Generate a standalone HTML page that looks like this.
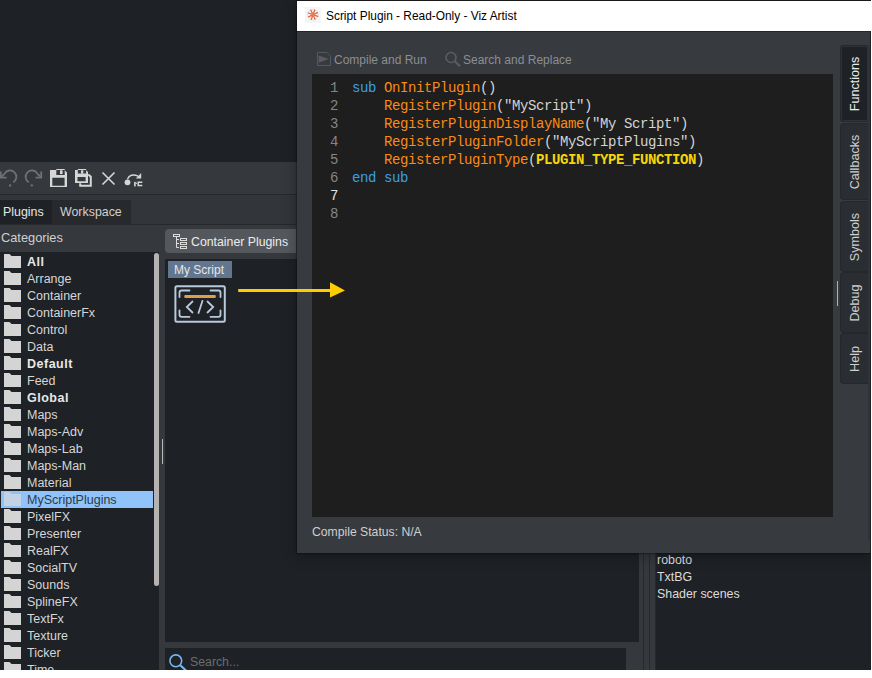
<!DOCTYPE html>
<html><head><meta charset="utf-8">
<style>
*{margin:0;padding:0;box-sizing:border-box}
html,body{width:872px;height:678px;overflow:hidden;background:#ffffff}
body{position:relative;font-family:"Liberation Sans",sans-serif;color:#d8d8d8}
.a{position:absolute}
.txt{white-space:nowrap}
.li{font-size:12.5px;line-height:17px;height:17px}
.k{color:#3d9fe3}.f{color:#fb8b12}.y{color:#f5d60c;font-weight:bold}
.mono{font-family:"Liberation Mono",monospace;font-size:14px;letter-spacing:-0.4px;line-height:18px}
.vt{position:absolute;left:840px;width:28px;border:1px solid #26282c;border-right:none;border-radius:4px 0 0 4px;background:#2a2d31}
.vt span{position:absolute;left:50%;top:50%;transform:translate(-50%,-50%) rotate(-90deg);font-size:12.6px;color:#d0d0d0;white-space:nowrap}
</style></head><body>
<!-- app background -->
<div class="a" style="left:0;top:0;width:872px;height:670px;background:#1e2125"></div>
<!-- toolbar -->
<div class="a" style="left:0;top:162px;width:300px;height:32px;background:#35383c"></div>
<div class="a" style="left:0;top:194px;width:300px;height:1px;background:#26282c"></div>
<div class="a" style="left:0;top:195px;width:300px;height:29px;background:#323539"></div>
<div class="a" style="left:0;top:225px;width:300px;height:34px;background:#35383c"></div>
<svg class="a" style="left:0;top:166px" width="150" height="24" viewBox="0 166 150 24">
  <g fill="none" stroke="#6d7075" stroke-width="1.8">
    <path id="undo" d="M13.2 182.2 A 6.3 6.3 0 1 0 4.6 173.6 L1.2 177.2"/>
    <path d="M0.8 171.5V177.7H6.5"/>
    <g transform="translate(42 0) scale(-1 1)">
      <path d="M13.2 182.2 A 6.3 6.3 0 1 0 4.6 173.6 L1.2 177.2"/>
      <path d="M0.8 171.5V177.7H6.5"/>
    </g>
  </g>
  <g fill="#6d7075">
    <circle cx="10.1" cy="185.4" r="1.2"/>
    <circle cx="31.8" cy="185.4" r="1.2"/>
  </g>
  <!-- save -->
  <path d="M50 170H64.5L67 172.5V187H50Z M56.3 169V175H64.7V169Z M52.3 177.8H64.6V185.8H52.3Z" fill="#d6d6d6" fill-rule="evenodd"/>
  <rect x="60" y="170.3" width="2.6" height="3.8" fill="#d6d6d6"/>
  <!-- save all -->
  <path d="M75 170H86L88 172V183H75Z M77.8 169V173.5H86.1V169Z M77.5 176.9H85.6V181.2H77.5Z" fill="#d6d6d6" fill-rule="evenodd"/>
  <rect x="81" y="170.3" width="2.3" height="3.2" fill="#d6d6d6"/>
  <path d="M88.3 174.6L90.8 176.8V185.7H80.2V183.2" fill="none" stroke="#d6d6d6" stroke-width="2"/>
  <!-- X -->
  <path d="M102.5 172.5L114.5 184.5M114.5 172.5L102.5 184.5" stroke="#d6d6d6" stroke-width="1.6"/>
  <!-- compile icon -->
  <circle cx="127.5" cy="182.3" r="2.9" fill="#d6d6d6"/>
  <path d="M127.4 179.3 Q130 172.8 138.2 176.2" fill="none" stroke="#d6d6d6" stroke-width="1.4"/>
  <path d="M141.2 173L141.2 178.4L135.8 178.4Z" fill="#d6d6d6"/>
  <rect x="134.1" y="181.8" width="1.6" height="4.6" fill="#d6d6d6"/>
  <rect x="135.5" y="182.6" width="1.4" height="1.3" fill="#d6d6d6"/>
  <path d="M142.3 182.3H138.2V185.5H142.3" fill="none" stroke="#d6d6d6" stroke-width="1.5"/>
</svg>
<!-- tabs -->
<div class="a" style="left:0;top:200px;width:52px;height:24px;background:#1e2125"></div>
<div class="a" style="left:52px;top:200px;width:79px;height:24px;background:#28292d"></div>
<div class="a txt" style="left:3px;top:200px;font-size:12.4px;line-height:24px;color:#e6e6e6">Plugins</div>
<div class="a txt" style="left:60px;top:200px;font-size:12.4px;line-height:24px;color:#d0d0d0">Workspace</div>
<div class="a" style="left:0;top:224px;width:300px;height:1px;background:#26282c"></div>
<div class="a txt" style="left:1px;top:229px;font-size:12.8px;line-height:17px;color:#d0d0d0">Categories</div>
<!-- list -->
<div class="a" style="left:0;top:252px;width:159px;height:418px;background:#1e2125"></div>
<svg class="a" style="left:4px;top:254px" width="17" height="14" viewBox="0 0 17 14"><path d="M0 0H5.5L7.5 2H17V14H0Z" fill="#d4d4d4"/></svg>
<div class="a txt li" style="left:27px;top:254px;font-weight:bold;letter-spacing:0.5px;color:#e8e8e8">All</div>
<svg class="a" style="left:4px;top:271px" width="17" height="14" viewBox="0 0 17 14"><path d="M0 0H5.5L7.5 2H17V14H0Z" fill="#d4d4d4"/></svg>
<div class="a txt li" style="left:27px;top:271px;color:#d6d6d6">Arrange</div>
<svg class="a" style="left:4px;top:288px" width="17" height="14" viewBox="0 0 17 14"><path d="M0 0H5.5L7.5 2H17V14H0Z" fill="#d4d4d4"/></svg>
<div class="a txt li" style="left:27px;top:288px;color:#d6d6d6">Container</div>
<svg class="a" style="left:4px;top:305px" width="17" height="14" viewBox="0 0 17 14"><path d="M0 0H5.5L7.5 2H17V14H0Z" fill="#d4d4d4"/></svg>
<div class="a txt li" style="left:27px;top:305px;color:#d6d6d6">ContainerFx</div>
<svg class="a" style="left:4px;top:322px" width="17" height="14" viewBox="0 0 17 14"><path d="M0 0H5.5L7.5 2H17V14H0Z" fill="#d4d4d4"/></svg>
<div class="a txt li" style="left:27px;top:322px;color:#d6d6d6">Control</div>
<svg class="a" style="left:4px;top:339px" width="17" height="14" viewBox="0 0 17 14"><path d="M0 0H5.5L7.5 2H17V14H0Z" fill="#d4d4d4"/></svg>
<div class="a txt li" style="left:27px;top:339px;color:#d6d6d6">Data</div>
<svg class="a" style="left:4px;top:356px" width="17" height="14" viewBox="0 0 17 14"><path d="M0 0H5.5L7.5 2H17V14H0Z" fill="#d4d4d4"/></svg>
<div class="a txt li" style="left:27px;top:356px;font-weight:bold;letter-spacing:0.5px;color:#e8e8e8">Default</div>
<svg class="a" style="left:4px;top:373px" width="17" height="14" viewBox="0 0 17 14"><path d="M0 0H5.5L7.5 2H17V14H0Z" fill="#d4d4d4"/></svg>
<div class="a txt li" style="left:27px;top:373px;color:#d6d6d6">Feed</div>
<svg class="a" style="left:4px;top:390px" width="17" height="14" viewBox="0 0 17 14"><path d="M0 0H5.5L7.5 2H17V14H0Z" fill="#d4d4d4"/></svg>
<div class="a txt li" style="left:27px;top:390px;font-weight:bold;letter-spacing:0.5px;color:#e8e8e8">Global</div>
<svg class="a" style="left:4px;top:407px" width="17" height="14" viewBox="0 0 17 14"><path d="M0 0H5.5L7.5 2H17V14H0Z" fill="#d4d4d4"/></svg>
<div class="a txt li" style="left:27px;top:407px;color:#d6d6d6">Maps</div>
<svg class="a" style="left:4px;top:424px" width="17" height="14" viewBox="0 0 17 14"><path d="M0 0H5.5L7.5 2H17V14H0Z" fill="#d4d4d4"/></svg>
<div class="a txt li" style="left:27px;top:424px;color:#d6d6d6">Maps-Adv</div>
<svg class="a" style="left:4px;top:441px" width="17" height="14" viewBox="0 0 17 14"><path d="M0 0H5.5L7.5 2H17V14H0Z" fill="#d4d4d4"/></svg>
<div class="a txt li" style="left:27px;top:441px;color:#d6d6d6">Maps-Lab</div>
<svg class="a" style="left:4px;top:458px" width="17" height="14" viewBox="0 0 17 14"><path d="M0 0H5.5L7.5 2H17V14H0Z" fill="#d4d4d4"/></svg>
<div class="a txt li" style="left:27px;top:458px;color:#d6d6d6">Maps-Man</div>
<svg class="a" style="left:4px;top:475px" width="17" height="14" viewBox="0 0 17 14"><path d="M0 0H5.5L7.5 2H17V14H0Z" fill="#d4d4d4"/></svg>
<div class="a txt li" style="left:27px;top:475px;color:#d6d6d6">Material</div>
<div class="a" style="left:1px;top:491px;width:152px;height:17px;background:#8fc3fa"></div>
<svg class="a" style="left:4px;top:492px" width="17" height="14" viewBox="0 0 17 14"><path d="M0 0H5.5L7.5 2H17V14H0Z" fill="#c3d2e4"/></svg>
<div class="a txt li" style="left:27px;top:492px;color:#2f3a48">MyScriptPlugins</div>
<svg class="a" style="left:4px;top:509px" width="17" height="14" viewBox="0 0 17 14"><path d="M0 0H5.5L7.5 2H17V14H0Z" fill="#d4d4d4"/></svg>
<div class="a txt li" style="left:27px;top:509px;color:#d6d6d6">PixelFX</div>
<svg class="a" style="left:4px;top:526px" width="17" height="14" viewBox="0 0 17 14"><path d="M0 0H5.5L7.5 2H17V14H0Z" fill="#d4d4d4"/></svg>
<div class="a txt li" style="left:27px;top:526px;color:#d6d6d6">Presenter</div>
<svg class="a" style="left:4px;top:543px" width="17" height="14" viewBox="0 0 17 14"><path d="M0 0H5.5L7.5 2H17V14H0Z" fill="#d4d4d4"/></svg>
<div class="a txt li" style="left:27px;top:543px;color:#d6d6d6">RealFX</div>
<svg class="a" style="left:4px;top:560px" width="17" height="14" viewBox="0 0 17 14"><path d="M0 0H5.5L7.5 2H17V14H0Z" fill="#d4d4d4"/></svg>
<div class="a txt li" style="left:27px;top:560px;color:#d6d6d6">SocialTV</div>
<svg class="a" style="left:4px;top:577px" width="17" height="14" viewBox="0 0 17 14"><path d="M0 0H5.5L7.5 2H17V14H0Z" fill="#d4d4d4"/></svg>
<div class="a txt li" style="left:27px;top:577px;color:#d6d6d6">Sounds</div>
<svg class="a" style="left:4px;top:594px" width="17" height="14" viewBox="0 0 17 14"><path d="M0 0H5.5L7.5 2H17V14H0Z" fill="#d4d4d4"/></svg>
<div class="a txt li" style="left:27px;top:594px;color:#d6d6d6">SplineFX</div>
<svg class="a" style="left:4px;top:611px" width="17" height="14" viewBox="0 0 17 14"><path d="M0 0H5.5L7.5 2H17V14H0Z" fill="#d4d4d4"/></svg>
<div class="a txt li" style="left:27px;top:611px;color:#d6d6d6">TextFx</div>
<svg class="a" style="left:4px;top:628px" width="17" height="14" viewBox="0 0 17 14"><path d="M0 0H5.5L7.5 2H17V14H0Z" fill="#d4d4d4"/></svg>
<div class="a txt li" style="left:27px;top:628px;color:#d6d6d6">Texture</div>
<svg class="a" style="left:4px;top:645px" width="17" height="14" viewBox="0 0 17 14"><path d="M0 0H5.5L7.5 2H17V14H0Z" fill="#d4d4d4"/></svg>
<div class="a txt li" style="left:27px;top:645px;color:#d6d6d6">Ticker</div>
<svg class="a" style="left:4px;top:662px" width="17" height="14" viewBox="0 0 17 14"><path d="M0 0H5.5L7.5 2H17V14H0Z" fill="#d4d4d4"/></svg>
<div class="a txt li" style="left:27px;top:662px;color:#d6d6d6">Time</div>
<div class="a" style="left:154px;top:253px;width:5px;height:333px;background:#b5b2b2;border-radius:2.5px"></div>
<div class="a" style="left:159px;top:252px;width:6px;height:418px;background:#35383c"></div>
<div class="a" style="left:162px;top:439px;width:1px;height:25px;background:#b8b8b8"></div>

<!-- middle panel -->
<div class="a" style="left:165px;top:229px;width:131px;height:24px;background:#54585d;border-radius:4px 0 0 4px"></div>
<svg class="a" style="left:170px;top:231px" width="20" height="20" viewBox="170 231 20 20">
  <g fill="none" stroke="#dcdcdc" stroke-width="1">
    <rect x="173.5" y="234.5" width="6" height="2"/>
    <path d="M176.5 237V247.5H179M176.5 239.5H179M176.5 243.5H179"/>
    <rect x="180.5" y="238.5" width="6" height="2"/>
    <rect x="180.5" y="242.5" width="6" height="2"/>
    <rect x="180.5" y="246.5" width="6" height="2"/>
  </g>
</svg>
<div class="a txt" style="left:191px;top:234px;font-size:12.3px;line-height:17px;color:#ececec">Container Plugins</div>
<div class="a" style="left:165px;top:259px;width:474px;height:383px;background:#1e2125"></div>
<div class="a" style="left:165px;top:642px;width:478px;height:6px;background:#35383c"></div>
<div class="a" style="left:165px;top:648px;width:461px;height:22px;background:#1e2125"></div>
<div class="a" style="left:626px;top:642px;width:17px;height:28px;background:#35383c"></div>
<div class="a" style="left:639px;top:259px;width:17px;height:411px;background:#35383c"></div>
<div class="a" style="left:643px;top:259px;width:1px;height:411px;background:#28292d"></div>
<div class="a" style="left:649px;top:259px;width:1px;height:411px;background:#28292d"></div>
<div class="a" style="left:655px;top:259px;width:1px;height:411px;background:#28292d"></div>
<div class="a" style="left:656px;top:259px;width:216px;height:411px;background:#1e2125"></div>
<svg class="a" style="left:166px;top:652px" width="24" height="18" viewBox="166 652 24 18">
  <circle cx="175.8" cy="660.8" r="5.9" fill="none" stroke="#78b6f2" stroke-width="1.6"/>
  <path d="M180 665L186 670.5" stroke="#78b6f2" stroke-width="2.2"/>
</svg>
<div class="a txt" style="left:190px;top:654px;font-size:12.3px;line-height:17px;color:#6a6d71">Search...</div>

<div class="a" style="left:168px;top:261px;width:64px;height:17px;background:#62778f"></div>
<div class="a txt" style="left:174px;top:262px;font-size:12px;line-height:17px;color:#e6e6e6">My Script</div>
<svg class="a" style="left:170px;top:280px" width="62" height="46" viewBox="170 280 62 46">
  <rect x="175.4" y="286.3" width="49.4" height="35.4" rx="1.5" fill="none" stroke="#b9c9dd" stroke-width="2"/>
  <g fill="none" stroke="#b9c9dd" stroke-width="1.8" stroke-linecap="round">
    <path d="M189.5 290.5H181.5Q179.5 290.5 179.5 292.5V297"/>
    <path d="M210.5 290.5H218.5Q220.5 290.5 220.5 292.5V297"/>
    <path d="M189.5 316.8H181.5Q179.5 316.8 179.5 314.8V310.3"/>
    <path d="M210.5 316.8H218.5Q220.5 316.8 220.5 314.8V310.3"/>
    <path d="M192.5 301.5L186.8 307L192.5 312.5"/>
    <path d="M207.5 301.5L213.2 307L207.5 312.5"/>
    <path d="M202.5 300.8L198.5 313"/>
  </g>
  <rect x="184.3" y="295" width="31.5" height="3" rx="1" fill="#d9a04e"/>
</svg>

<div class="a txt" style="left:657px;top:552px;font-size:12.4px;line-height:17px;color:#dcdcdc">roboto<br>TxtBG<br>Shader scenes</div>

<!-- script window -->
<div class="a" style="left:297px;top:0;width:574px;height:553px;box-shadow:0 3px 14px rgba(0,0,0,0.28),0 0 1px 1px rgba(0,0,0,0.25)"></div>
<div class="a" style="left:297px;top:0;width:575px;height:553px;background:#373a3e"></div>
<div class="a" style="left:297px;top:0;width:575px;height:1px;background:#1a1a1a"></div>
<div class="a" style="left:297px;top:1px;width:575px;height:30px;background:#ffffff"></div>
<div class="a" style="left:305px;top:7px;width:16px;height:16px;background:#f4f5f5"></div>
<svg class="a" style="left:305px;top:7px" width="16" height="16" viewBox="0 0 16 16">
  <circle cx="8" cy="7.7" r="5.3" fill="none" stroke="#dfe0e2" stroke-width="0.9"/>
  <g stroke="#e8663f" stroke-width="1.3" stroke-linecap="round" transform="rotate(20 8 7.7)">
    <path d="M8 2.7V12.7M3 7.7H13M4.5 4.2L11.5 11.2M4.5 11.2L11.5 4.2"/>
  </g>
  <circle cx="8" cy="7.7" r="1.6" fill="#ee7a5a"/>
</svg>
<div class="a txt" style="left:326px;top:8px;font-size:11.9px;line-height:17px;color:#000">Script Plugin - Read-Only - Viz Artist</div>
<svg class="a" style="left:316px;top:51px" width="16" height="16" viewBox="316 51 16 16">
  <path d="M317.5 52.5H327L330.5 56V65.5H317.5Z" fill="none" stroke="#55585c" stroke-width="1"/>
  <path d="M318.6 55.4L328.6 59.1L318.6 62.8Z" fill="#585b5f"/>
</svg>
<div class="a txt" style="left:334px;top:52px;font-size:12px;line-height:17px;color:#8b8e92">Compile and Run</div>
<svg class="a" style="left:444px;top:51px" width="18" height="17" viewBox="444 51 18 17">
  <circle cx="451" cy="57.5" r="5" fill="none" stroke="#5a5d61" stroke-width="1.6"/>
  <path d="M454.5 61L460 66.3" stroke="#5a5d61" stroke-width="2.2"/>
</svg>
<div class="a txt" style="left:463px;top:52px;font-size:12px;line-height:17px;color:#8b8e92">Search and Replace</div>
<div class="a" style="left:312px;top:74px;width:521px;height:443px;background:#1e1e1e"></div>
<!-- code -->
<div class="a mono" style="left:312px;top:79px;width:26px;color:#858585;text-align:right">1<br>2<br>3<br>4<br>5<br>6<br><span style="color:#e2e2e2">7</span><br>8</div>
<div class="a txt mono" style="left:352px;top:79px;color:#d4d4d4;white-space:pre"><span class="k">sub</span> <span class="f">OnInitPlugin</span>()
    <span class="f">RegisterPlugin</span>("MyScript")
    <span class="f">RegisterPluginDisplayName</span>("My Script")
    <span class="f">RegisterPluginFolder</span>("MyScriptPlugins")
    <span class="f">RegisterPluginType</span>(<span class="y">PLUGIN_TYPE_FUNCTION</span>)
<span class="k">end</span> <span class="k">sub</span></div>
<div class="a txt" style="left:312px;top:524px;font-size:12.2px;line-height:17px;color:#d0d0d0">Compile Status: N/A</div>
<!-- right tabs -->
<div class="a" style="left:297px;top:31px;width:574px;height:1px;background:#232528"></div>
<div class="a" style="left:868px;top:45px;width:2px;height:496px;background:#303337"></div>
<div class="a" style="left:870px;top:31px;width:1px;height:522px;background:#1f2124"></div>
<div class="vt" style="top:45px;height:77px;background:#1e2125;box-shadow:inset 0 0 0 1px #2f3236"><span style="color:#ececec">Functions</span></div>
<div class="vt" style="top:123px;height:77px"><span>Callbacks</span></div>
<div class="vt" style="top:201px;height:71px"><span>Symbols</span></div>
<div class="vt" style="top:272px;height:61px"><span>Debug</span></div>
<div class="vt" style="top:333px;height:51px"><span>Help</span></div>
<div class="a" style="left:837px;top:281px;width:1px;height:25px;background:#b0b0b0"></div>
<!-- arrow -->
<svg class="a" style="left:230px;top:276px" width="120" height="28" viewBox="230 276 120 28">
  <rect x="238.2" y="289" width="93" height="3" fill="#ffcc00"/>
  <path d="M330 282.2L345 290.5L330 297.5Z" fill="#ffcc00"/>
</svg>
<div class="a" style="left:871px;top:0;width:1px;height:678px;background:#fff"></div>
<div class="a" style="left:0;top:670px;width:872px;height:8px;background:#fff"></div>
</body></html>
